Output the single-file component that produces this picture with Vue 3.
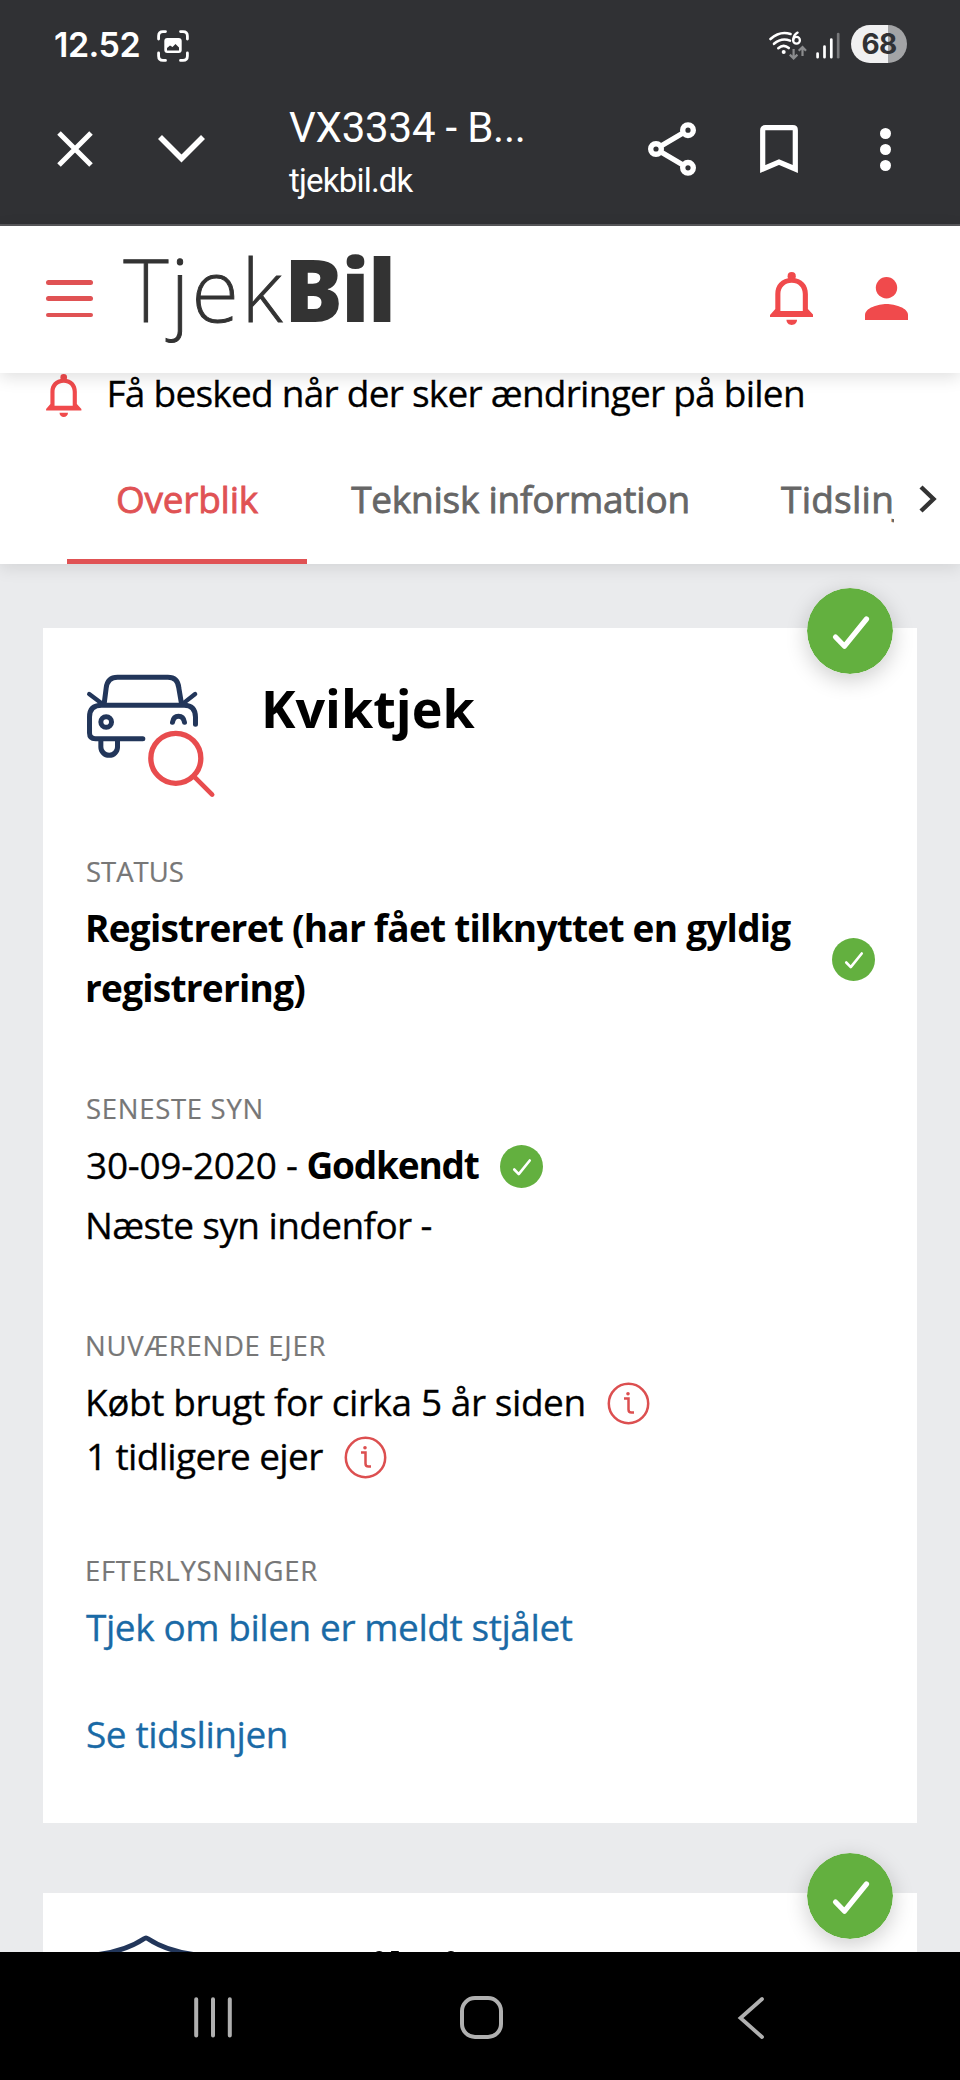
<script setup>
import { h } from 'vue'

const Bell = () =>
  h('svg', { viewBox: '0 0 43.5 53' }, [
    h('circle', { cx: 21.7, cy: 4.2, r: 4.1 }),
    h('path', {
      'fill-rule': 'evenodd',
      d: 'M21.7 6C11 6 5.3 13 5.3 22V37L0 43V45H43.5V43L37.9 37V22C37.9 13 32.4 6 21.7 6ZM21.7 10.7C28.5 10.7 32.8 15.5 32.8 22V39H10.4V22C10.4 15.5 15 10.7 21.7 10.7Z',
    }),
    h('path', { d: 'M16.5 47.8H27C27 51 24.6 53 21.7 53S16.5 51 16.5 47.8Z' }),
  ])

const Check = () =>
  h('svg', { viewBox: '0 0 86 86' }, [
    h('circle', { cx: 43, cy: 43, r: 43, fill: '#63b03f' }),
    h('path', {
      d: 'M28.5 49L37.5 58.2L59.5 31',
      fill: 'none',
      stroke: '#fff',
      'stroke-width': 5.2,
      'stroke-linecap': 'round',
      'stroke-linejoin': 'round',
    }),
  ])

const Info = () =>
  h('svg', { viewBox: '0 0 43 43', fill: 'none', stroke: '#dc4f50', 'stroke-width': 2.5 }, [
    h('circle', { cx: 21.5, cy: 21.5, r: 19.7 }),
    h('path', { d: 'M17 16.6H21.5V27.5Q21.5 30.6 24.5 30.6H27' }),
    h('circle', { cx: 21, cy: 11.8, r: 1.8, fill: '#dc4f50', stroke: 'none' }),
  ])
</script>

<template>
  <div class="screen">
    <div class="browser">
      <div class="status">
        <span class="clock">12.52</span>
        <svg class="shot" viewBox="0 0 32 32">
          <g fill="none" stroke="#fff" stroke-width="2.8" stroke-linecap="round">
            <path d="M1.6 9V6Q1.6 1.6 6 1.6H8.5M23.5 1.6H26Q30.4 1.6 30.4 6V9M30.4 23V26Q30.4 30.4 26 30.4H23.5M8.5 30.4H6Q1.6 30.4 1.6 26V23" />
          </g>
          <rect x="7.3" y="8" width="17.4" height="15" rx="3" fill="#fff" />
          <path d="M10 20.5V18L13 15.5L15.5 17L18.5 14L22 17.5V20.5Z" fill="#303134" />
        </svg>
        <svg class="wifi" viewBox="0 0 38 30">
          <g fill="none" stroke="#fff" stroke-width="2.6" stroke-linecap="round">
            <path d="M1.5 8Q11 -0.5 21.5 3" />
            <path d="M5 12.8Q12.5 6.3 21 9.6" />
            <path d="M9.3 17.2Q14.5 12.6 19.8 17" />
          </g>
          <circle cx="14.7" cy="21" r="2" fill="#fff" />
          <g fill="none" stroke="#fff" stroke-width="2.3" stroke-linecap="round">
            <circle cx="27.5" cy="9.3" r="3.4" />
            <path d="M24.2 8.8Q24.6 4 28.6 1.6" />
          </g>
          <path d="M24.6 18V27M20.8 23.6L24.6 27.4L28.4 23.6M33.5 25V16.4M29.7 19.8L33.5 16L37 19.8" fill="none" stroke="#8b8c8e" stroke-width="2.2" />
        </svg>
        <svg class="signal" viewBox="0 0 24 28">
          <g stroke-width="2.7" stroke-linecap="round">
            <path d="M1.6 21.5V25.2M8.5 14.5V25.2M15.3 7.5V25.2" stroke="#fff" />
            <path d="M22.2 2V25.2" stroke="#77787a" />
          </g>
        </svg>
        <span class="battery">68</span>
      </div>
      <div class="toolbar">
        <svg class="close" viewBox="0 0 36 36"><path d="M2 2L34 34M34 2L2 34" fill="none" stroke="#fff" stroke-width="5" /></svg>
        <svg class="down" viewBox="0 0 47 28"><path d="M2 2L23.5 23.5L45 2" fill="none" stroke="#fff" stroke-width="5.6" /></svg>
        <div class="page">
          <div class="title">VX3334 - B...</div>
          <div class="host">tjekbil.dk</div>
        </div>
        <svg class="share" viewBox="0 0 48 54">
          <g fill="none" stroke="#fff" stroke-width="5.4">
            <path d="M13 24L35 11M13 30L35 43" />
            <circle cx="8" cy="27" r="5.3" />
            <circle cx="40" cy="8.2" r="5.3" />
            <circle cx="40" cy="45.8" r="5.3" />
          </g>
        </svg>
        <svg class="mark" viewBox="0 0 38 48"><path d="M2.7 44V5.2Q2.7 2.7 5.2 2.7H32.8Q35.3 2.7 35.3 5.2V44L19 37Z" fill="none" stroke="#fff" stroke-width="5.2" /></svg>
        <svg class="more" viewBox="0 0 11 43"><g fill="#fff"><circle cx="5.5" cy="5.5" r="5.5" /><circle cx="5.5" cy="21.5" r="5.5" /><circle cx="5.5" cy="37.5" r="5.5" /></g></svg>
      </div>
    </div>

    <header class="site">
      <div class="burger"><i></i><i></i><i></i></div>
      <div class="logo"><span>Tjek</span><b>Bil</b></div>
      <Bell class="bell" />
      <svg class="user" viewBox="0 0 43 43"><g fill="#f04a4c"><circle cx="21.5" cy="10.7" r="10.7" /><path d="M0 43V38C0 31 13 27 21.5 27S43 31 43 38V43Z" /></g></svg>
    </header>

    <section class="sub">
      <div class="notify"><Bell class="bell small" /><span>Få besked når der sker ændringer på bilen</span></div>
      <nav class="tabs">
        <div class="strip">
          <a class="tab on">Overblik</a>
          <a class="tab">Teknisk information</a>
          <a class="tab last">Tidslinjen</a>
        </div>
        <svg class="next" viewBox="0 0 18 28"><path d="M2 2L14.5 14L2 26" fill="none" stroke="#333" stroke-width="4.4" /></svg>
      </nav>
    </section>

    <main>
      <article class="card first">
        <Check class="badge" />
        <div class="head">
          <svg class="car" viewBox="165 280 392 376">
            <g fill="none" stroke="#22365a" stroke-width="15" stroke-linecap="round" stroke-linejoin="round">
              <path d="M222 372L228 325Q232 293 262 293H413Q443 293 446 325L454 372" />
              <path d="M177 343L212 369M495 343L462 369" stroke-width="13" />
              <path d="M338 477H196Q178 477 178 460V412Q178 377 214 377H462Q495 377 496 412V434" />
              <circle cx="228" cy="427" r="16" />
              <path d="M427 428Q430 410 445 410Q460 410 463 428" />
              <path d="M212 484V502A25 25 0 0 0 262 502V484" />
            </g>
            <g fill="none" stroke="#e84c4e" stroke-linecap="round">
              <circle cx="437" cy="536" r="75" stroke-width="16" />
              <path d="M495 594L546 645" stroke-width="14" />
            </g>
          </svg>
          <h2>Kviktjek</h2>
        </div>

        <section class="block">
          <h3 class="plain">STATUS</h3>
          <div class="row split">
            <b class="stem reg">Registreret (har fået tilknyttet en gyldig<br />registrering)</b>
            <Check class="tick" />
          </div>
        </section>
        <section class="block">
          <h3>SENESTE SYN</h3>
          <div class="row"><span class="date">30-09-2020 -</span><b class="ok">Godkendt</b><Check class="tick" /></div>
          <div class="row"><span class="stem next-check">Næste syn indenfor -</span></div>
        </section>
        <section class="block owner">
          <h3 class="stem">NUVÆRENDE EJER</h3>
          <div class="row tight"><span class="stem">Købt brugt for cirka 5 år siden</span><Info class="info" /></div>
          <div class="row tight"><span class="prev">1 tidligere ejer</span><Info class="info" /></div>
        </section>
        <section class="block wanted">
          <h3 class="stem">EFTERLYSNINGER</h3>
          <div class="row tight"><a>Tjek om bilen er meldt stjålet</a></div>
        </section>
        <div class="row tight"><a>Se tidslinjen</a></div>
      </article>

      <article class="card second">
        <Check class="badge" />
        <div class="head">
          <svg class="shield" viewBox="0 0 131 129"><path d="M63 4.800Q61 3 59 4.800C46 13.500 32 18 13 20.500V62Q17 103 61 125Q105 103 109 62V20.500C90 18 76 13.500 63 4.800Z" fill="none" stroke="#22365a" stroke-width="4.800" /></svg>
          <h2>Forsikring</h2>
        </div>
      </article>
    </main>

    <footer>
      <svg class="recent" viewBox="0 0 38 41"><path d="M2.200 2.200V38.500M19 2.200V38.500M35.800 2.200V38.500" stroke="#b0b0b0" stroke-width="4" stroke-linecap="round" /></svg>
      <svg class="home" viewBox="0 0 43 43"><rect x="2" y="2" width="39" height="39" rx="13" fill="none" stroke="#b0b0b0" stroke-width="4" /></svg>
      <svg class="back" viewBox="0 0 28 44"><path d="M25 3L3.500 22L25 41" fill="none" stroke="#b0b0b0" stroke-width="3.800" stroke-linecap="round" /></svg>
    </footer>
  </div>
</template>

<style>
body {
  background: #eaebed;
}
</style>

<style scoped>
.screen {
  width: 960px;
  height: 2080px;
  display: flex;
  flex-direction: column;
  overflow: hidden;
  background: #eaebed;
  color: #000;
  font-family: "Open Sans", "Noto Sans", sans-serif;
  font-size: 37px;
}
svg {
  display: block;
  flex: none;
}
span,
a,
b {
  white-space: nowrap;
}

.browser {
  height: 226px;
  flex: none;
  box-sizing: border-box;
  border-bottom: 2px solid #58585b;
  background: #303134;
  color: #fff;
}
.status {
  display: flex;
  height: 90px;
}
.clock {
  width: 103px;
  padding-left: 54px;
  font: 600 34px/90px Inter, sans-serif;
  letter-spacing: -0.5px;
}
.shot {
  width: 32px;
  height: 32px;
  margin-top: 30px;
}
.wifi {
  width: 38px;
  height: 30px;
  margin: 31px 0 0 580px;
}
.signal {
  width: 24px;
  height: 28px;
  margin: 32px 0 0 9px;
}
.battery {
  width: 56px;
  height: 38px;
  margin: 25px 0 0 11px;
  border-radius: 19px;
  background: linear-gradient(90deg, #f0f0f1 37.5px, #a3a4a6 37.5px);
  color: #303134;
  text-align: center;
  font: 700 28px/38px Inter, sans-serif;
  letter-spacing: -0.6px;
}
.toolbar {
  display: flex;
  height: 134px;
}
.close {
  width: 36px;
  height: 36px;
  margin: 41px 0 0 56.5px;
}
.down {
  width: 47px;
  height: 28px;
  margin: 45px 0 0 65.5px;
}
.page {
  width: 359px;
  padding-left: 84px;
}
.title {
  margin-top: 12px;
  font: 400 42px/52px Roboto, sans-serif;
  letter-spacing: -0.2px;
}
.host {
  font: 400 33px/53px Roboto, sans-serif;
  letter-spacing: -0.8px;
}
.share {
  width: 48px;
  height: 54px;
  margin: 32px 0 0 0;
}
.mark {
  width: 38px;
  height: 48px;
  margin: 35px 0 0 64px;
}
.more {
  width: 11px;
  height: 43px;
  margin: 38px 0 0 82px;
}

.site {
  position: relative;
  z-index: 1;
  display: flex;
  height: 147px;
  flex: none;
  background: #fff;
  box-shadow: 0 4px 16px rgba(0, 0, 0, 0.13);
}
.burger {
  display: flex;
  flex-direction: column;
  gap: 11.7px;
  width: 46.5px;
  margin: 54px 0 0 46px;
}
.burger i {
  height: 4.6px;
  border-radius: 3px;
  background: #e05254;
}
.logo {
  width: 646px;
  padding-left: 31px;
  color: #333;
  font-size: 87px;
  line-height: 124px;
  white-space: nowrap;
}
.logo span {
  font-family: "Noto Sans", sans-serif;
  font-weight: 200;
  letter-spacing: 2.2px;
  -webkit-text-stroke: 1px #333;
}
.logo b {
  font-weight: 800;
  letter-spacing: -1.6px;
}
.bell {
  width: 43.5px;
  height: 53px;
  margin-top: 46px;
  fill: #f04a4c;
}
.user {
  width: 43px;
  height: 43px;
  margin: 51px 0 0 51.5px;
}

.sub {
  display: flex;
  flex-direction: column;
  height: 191px;
  flex: none;
  background: #fff;
  box-shadow: 0 4px 16px rgba(0, 0, 0, 0.1);
}
.notify {
  display: flex;
  height: 80px;
  padding-left: 46px;
}
.notify .small {
  width: 35.5px;
  height: 43px;
  margin-top: 1px;
}
.notify span {
  margin-left: 25px;
  line-height: 40px;
  letter-spacing: -0.75px;
  -webkit-text-stroke: 0.3px;
}
.tabs {
  display: flex;
  height: 111px;
}
.strip {
  display: flex;
  width: 827px;
  margin-left: 67px;
  overflow: hidden;
}
.tab {
  box-sizing: border-box;
  flex: none;
  width: 240px;
  height: 111px;
  border-bottom: 5px solid transparent;
  color: #666;
  font-weight: 500;
  line-height: 91px;
  text-align: center;
  letter-spacing: -0.25px;
  -webkit-text-stroke: 0.8px;
}
.tab:nth-child(2) {
  width: 427px;
}
.tab.last {
  padding-left: 47px;
  text-align: left;
  letter-spacing: 0.25px;
}
.tab.on {
  border-color: #e05254;
  color: #e05254;
}
.next {
  width: 18px;
  height: 28px;
  margin: 32px 0 0 25px;
}

main {
  flex: 1;
  min-height: 0;
  padding: 64px 43px 0;
  overflow: hidden;
}
.card {
  position: relative;
  box-sizing: border-box;
  padding: 45px 43px 0;
  background: #fff;
}
.first {
  height: 1195px;
}
.second {
  height: 300px;
  margin-top: 69.5px;
}
.badge {
  position: absolute;
  top: -40px;
  right: 24px;
  width: 86px;
  height: 86px;
  border-radius: 50%;
  box-shadow: 0 6px 22px rgba(0, 0, 0, 0.2);
}
.head {
  display: flex;
  height: 179px;
  margin-left: -1px;
}
.car {
  width: 131px;
  height: 125.3px;
}
.shield {
  width: 131px;
  height: 129px;
  margin-top: -4px;
}
h2 {
  margin: 0 0 0 45px;
  font-size: 52px;
  font-weight: 700;
  line-height: 70px;
}
.second h2 {
  margin-top: -2px;
}
h3 {
  margin: 0;
  color: #777;
  font-size: 27.5px;
  font-weight: 400;
  line-height: 40px;
  letter-spacing: 0.7px;
  -webkit-text-stroke: 0.2px;
}
h3.plain {
  letter-spacing: 0;
}
.stem {
  margin-left: -1px;
}
.block {
  height: 237px;
}
.owner {
  height: 225px;
}
.wanted {
  height: 156px;
}
.row {
  display: flex;
  height: 60px;
  line-height: 60px;
  letter-spacing: -0.43px;
}
.row span,
.row a {
  -webkit-text-stroke: 0.3px;
}
h3 + .row {
  margin-top: 6px;
}
.row.tight {
  height: 54px;
  line-height: 54px;
}
h3 + .row.tight {
  margin-top: 9px;
}
.split {
  height: 120px;
  justify-content: space-between;
}
.row .reg {
  letter-spacing: -0.75px;
}
.tick {
  width: 43px;
  height: 43px;
  margin: 10px 0 0 21.5px;
}
.split .tick {
  margin: 40px -1px 0 0;
}
.date {
  width: 220.5px;
  letter-spacing: -0.25px;
}
.ok {
  letter-spacing: -1.2px;
}
.next-check {
  letter-spacing: -0.6px;
}
.prev {
  letter-spacing: -0.65px;
}
.info {
  width: 43px;
  height: 43px;
  margin: 7px 0 0 21px;
}
a {
  color: #1a6aa6;
}

footer {
  display: flex;
  height: 128px;
  flex: none;
  background: #000;
}
.recent {
  width: 38px;
  height: 41px;
  margin: 45px 0 0 194px;
}
.home {
  width: 43px;
  height: 43px;
  margin: 44px 0 0 228px;
}
.back {
  width: 28px;
  height: 44px;
  margin: 44px 0 0 234px;
}
</style>
